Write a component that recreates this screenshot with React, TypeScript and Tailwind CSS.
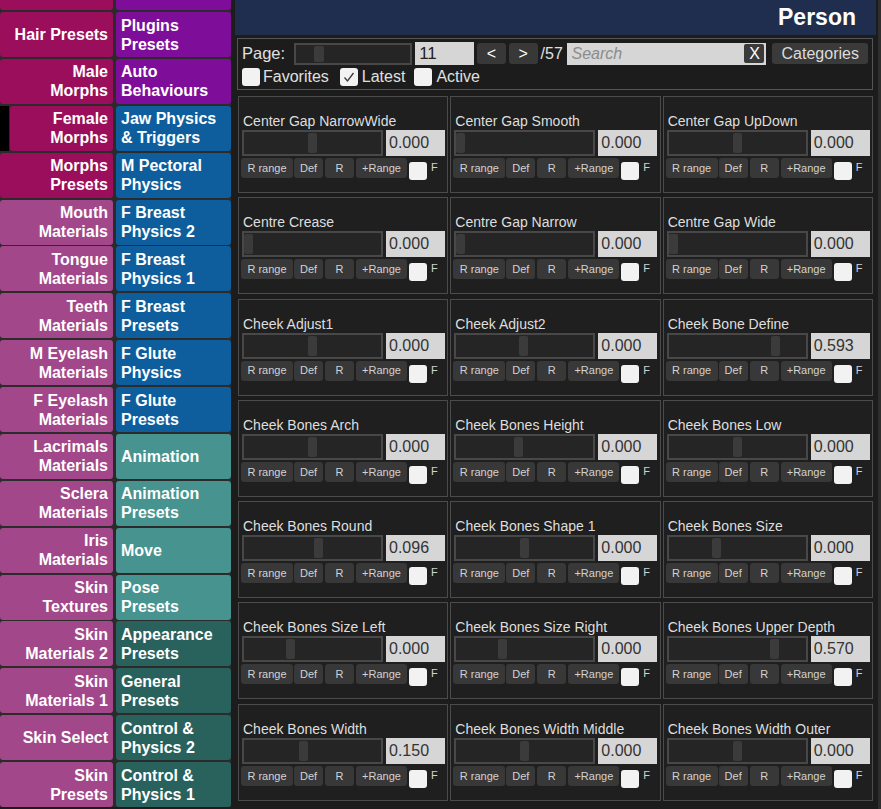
import React from "react";

const tone: Record<string, string> = {
  m: "bg-[#9a0e5c]",
  p: "bg-[#a2478a]",
  v: "bg-[#7e0e99]",
  b: "bg-[#0e5e9d]",
  t: "bg-[#46938f]",
  d: "bg-[#29615d]",
};

// left / right menu columns: [label, tone]
const rows: [string, string, string, string][] = [
  ["", "m", "", "v"],
  ["Hair Presets", "m", "Plugins\nPresets", "v"],
  ["Male\nMorphs", "m", "Auto\nBehaviours", "v"],
  ["Female\nMorphs", "m", "Jaw Physics\n& Triggers", "b"],
  ["Morphs\nPresets", "m", "M Pectoral\nPhysics", "b"],
  ["Mouth\nMaterials", "p", "F Breast\nPhysics 2", "b"],
  ["Tongue\nMaterials", "p", "F Breast\nPhysics 1", "b"],
  ["Teeth\nMaterials", "p", "F Breast\nPresets", "b"],
  ["M Eyelash\nMaterials", "p", "F Glute\nPhysics", "b"],
  ["F Eyelash\nMaterials", "p", "F Glute\nPresets", "b"],
  ["Lacrimals\nMaterials", "p", "Animation", "t"],
  ["Sclera\nMaterials", "p", "Animation\nPresets", "t"],
  ["Iris\nMaterials", "p", "Move", "t"],
  ["Skin\nTextures", "p", "Pose\nPresets", "t"],
  ["Skin\nMaterials 2", "p", "Appearance\nPresets", "d"],
  ["Skin\nMaterials 1", "p", "General\nPresets", "d"],
  ["Skin Select", "p", "Control &\nPhysics 2", "d"],
  ["Skin\nPresets", "p", "Control &\nPhysics 1", "d"],
];

// title, value, thumb offset (px from slider edge)
const morphs: [string, string, number][] = [
  ["Center Gap NarrowWide", "0.000", 64],
  ["Center Gap Smooth", "0.000", 0],
  ["Center Gap UpDown", "0.000", 64],
  ["Centre Crease", "0.000", 0],
  ["Centre Gap Narrow", "0.000", 0],
  ["Centre Gap Wide", "0.000", 0],
  ["Cheek Adjust1", "0.000", 64],
  ["Cheek Adjust2", "0.000", 63],
  ["Cheek Bone Define", "0.593", 102],
  ["Cheek Bones Arch", "0.000", 64],
  ["Cheek Bones Height", "0.000", 58],
  ["Cheek Bones Low", "0.000", 64],
  ["Cheek Bones Round", "0.096", 70],
  ["Cheek Bones Shape 1", "0.000", 64],
  ["Cheek Bones Size", "0.000", 43],
  ["Cheek Bones Size Left", "0.000", 42],
  ["Cheek Bones Size Right", "0.000", 42],
  ["Cheek Bones Upper Depth", "0.570", 101],
  ["Cheek Bones Width", "0.150", 55],
  ["Cheek Bones Width Middle", "0.000", 64],
  ["Cheek Bones Width Outer", "0.000", 64],
];

function MenuButton({ label, t, align }: { label: string; t: string; align: "l" | "r" }) {
  return (
    <div
      className={`flex h-full flex-1 items-center whitespace-pre-line rounded-[3px] text-[16px] font-bold leading-[19px] text-white ${tone[t]} ${
        align === "r" ? "justify-end pr-[5px] text-right" : "justify-start pl-[5px] text-left"
      }`}
    >
      {label}
    </div>
  );
}

function SmallBtn({ label, w }: { label: string; w: string }) {
  return (
    <div className={`flex h-[20px] items-center justify-center rounded-[3px] bg-[#383838] text-[11px] text-[#d2d2d2] ${w}`}>
      {label}
    </div>
  );
}

function MorphCard({ title, value, thumb }: { title: string; value: string; thumb: number }) {
  return (
    <div className="h-[97px] border border-[#4b4b4b] bg-[#1f1f1f] px-[2px] pt-[16px]">
      <div className="pl-[2px] text-[14px] leading-[16px] text-[#dedede]">{title}</div>
      <div className="ml-[1px] mt-[1px] flex gap-[3px]">
        <div className="relative h-[26px] w-[141px] border-2 border-[#484848] bg-[#252525]">
          <div
            className="absolute bottom-[1px] top-[1px] w-[9px] rounded-[2px] bg-[#3b3b3b]"
            style={{ left: thumb }}
          />
        </div>
        <div className="flex h-[26px] w-[59px] items-center bg-[#d6d6d6] pl-[3px] text-[16px] text-[#333]">
          {value}
        </div>
      </div>
      <div className="mt-[2px] flex items-start">
        <SmallBtn label="R range" w="w-[52px]" />
        <div className="ml-[1px]">
          <SmallBtn label="Def" w="w-[29px]" />
        </div>
        <div className="ml-[2px]">
          <SmallBtn label="R" w="w-[29px]" />
        </div>
        <div className="ml-[2px]">
          <SmallBtn label="+Range" w="w-[51px]" />
        </div>
        <div className="ml-[2px] mt-[4px] h-[18px] w-[18px] rounded-[3px] bg-[#f2f2f2]" />
        <div className="ml-[4px] mt-[1px] text-[11px] text-[#d2d2d2]">F</div>
      </div>
    </div>
  );
}

function Check({ on }: { on?: boolean }) {
  return (
    <div className="flex h-[18px] w-[18px] items-center justify-center rounded-[3px] bg-[#f2f2f2]">
      {on && (
        <svg width="14" height="14" viewBox="0 0 14 14">
          <polyline points="2.5,7.5 5.5,11 11.5,3" fill="none" stroke="#3a3a3a" strokeWidth="1.3" />
        </svg>
      )}
    </div>
  );
}

export default function App() {
  return (
    <div className="flex h-[809px] w-[881px] overflow-hidden bg-[#1c1c1c] font-['Liberation_Sans',Arial,sans-serif]">
      <div className="-mt-[34.875px] flex w-[231px] shrink-0 flex-col gap-y-[1.875px] self-start bg-[#2b2b2b]">
        {rows.map(([l, lt, r, rt], i) => (
          <div key={i} className="flex h-[45px] gap-x-[3px]">
            <div className="flex w-[113px] gap-[1px]">
              {i === 3 && <div className="w-[9px] bg-black" />}
              <MenuButton label={l} t={lt} align="r" />
            </div>
            <div className="flex w-[115px]">
              <MenuButton label={r} t={rt} align="l" />
            </div>
          </div>
        ))}
      </div>

      <div className="ml-[4px] flex w-[641px] shrink-0 flex-col">
        <div className="flex h-[35px] items-center justify-end bg-[#1f2d4e] pr-[20px] text-[23px] font-bold text-white">
          Person
        </div>
        <div className="px-[2px] pt-[3px]">
          <div className="h-[52px] w-[636px] border border-[#555] px-[4px] pt-[3px] text-[#e0e0e0]">
            <div className="flex h-[23px] items-center">
              <span className="w-[52px] text-[16.5px]">Page:</span>
              <div className="relative h-[22px] w-[119px] border-2 border-[#484848] bg-[#252525]">
                <div className="absolute bottom-[1px] left-[18px] top-[1px] w-[10px] rounded-[2px] bg-[#3b3b3b]" />
              </div>
              <div className="ml-[3px] flex h-[23px] w-[59px] items-center bg-[#d6d6d6] pl-[4px] text-[17px] text-[#222]">
                11
              </div>
              <div className="ml-[3px] flex h-[21px] w-[29px] items-center justify-center rounded-[3px] bg-[#383838] text-[16px] text-white">
                &lt;
              </div>
              <div className="ml-[3px] flex h-[21px] w-[29px] items-center justify-center rounded-[3px] bg-[#383838] text-[16px] text-white">
                &gt;
              </div>
              <span className="ml-[3px] w-[27px] text-[16px]">/57</span>
              <div className="flex h-[22px] w-[200px] items-center justify-between bg-[#d6d6d6] pl-[4px] pr-[2px]">
                <span className="text-[16px] italic text-[#8c8c8c]">Search</span>
                <div className="flex h-[19px] w-[20px] items-center justify-center rounded-[2px] bg-[#3a3a3a] text-[16px] text-white">
                  X
                </div>
              </div>
              <div className="ml-[6px] flex h-[21px] w-[96px] items-center justify-center rounded-[3px] bg-[#3a3a3a] text-[16px] text-[#dcdcdc]">
                Categories
              </div>
            </div>
            <div className="mt-[3px] flex h-[18px] items-center text-[16px]">
              <Check />
              <span className="ml-[3px]">Favorites</span>
              <div className="ml-[11px]">
                <Check on />
              </div>
              <span className="ml-[4px]">Latest</span>
              <div className="ml-[9px]">
                <Check />
              </div>
              <span className="ml-[4px]">Active</span>
            </div>
          </div>

          <div className="mt-[6px] grid w-[636px] grid-cols-3 gap-x-[2px] gap-y-[4.3px] pl-[1px]">
            {morphs.map(([t, v, p]) => (
              <MorphCard key={t} title={t} value={v} thumb={p} />
            ))}
          </div>
        </div>
      </div>
      <div className="ml-auto w-[3px] bg-[#2e2e2e]" />
    </div>
  );
}
